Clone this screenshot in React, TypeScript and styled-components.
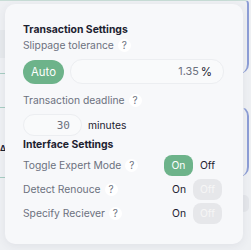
import React from 'react';
import styled, { createGlobalStyle } from 'styled-components';

const GlobalStyle = createGlobalStyle`
  html, body {
    margin: 0;
    padding: 0;
  }
  body {
    font-family: Inter, "Noto Sans", sans-serif;
    background: #eef0f3;
  }
`;

const Page = styled.div`
  position: relative;
  width: 251px;
  height: 250px;
  overflow: hidden;
  background: #eef0f3;
`;

const Backdrop = styled.div`
  display: flex;
  flex-direction: column;
  width: 249px;
`;

const BackPanel = styled.div<{ $h: number; $top?: boolean }>`
  box-sizing: border-box;
  height: ${(p) => p.$h}px;
  border-right: 2px solid #8d9ed6;
  border-top: 1px solid ${(p) => (p.$top ? '#c8ddd6' : 'transparent')};
  border-radius: ${(p) => (p.$top ? '0 4px 10px 0' : '0 10px 10px 0')};
  display: flex;
  flex-direction: column;
`;

const LeftBand = styled.div<{ $h: number; $mt?: number }>`
  width: 6px;
  height: ${(p) => p.$h}px;
  margin-top: ${(p) => p.$mt ?? 0}px;
  background: #e6e9ec;
`;

const LeftLine = styled.div<{ $mt?: number }>`
  width: 6px;
  height: 1px;
  margin-top: ${(p) => p.$mt ?? 0}px;
  background: #a7cdc2;
`;

const Glyph = styled.div`
  margin-top: 36px;
  font-size: 8px;
  font-weight: 700;
  line-height: 8px;
  color: #1d2230;
`;

const Spacer = styled.div<{ $h: number }>`
  height: ${(p) => p.$h}px;
`;

const GreyBlob = styled.div`
  align-self: flex-end;
  width: 10px;
  height: 17px;
  border-radius: 6px;
  background: #e4e6ea;
`;

const Card = styled.div`
  position: absolute;
  left: 5px;
  top: 4px;
  width: 238px;
  height: 240px;
  box-sizing: border-box;
  padding: 19px 19px 0 18px;
  background: #f7f8fa;
  border-radius: 10px;
  box-shadow: 0 2px 8px rgba(60, 70, 90, 0.08);
  display: flex;
  flex-direction: column;
`;

const Title = styled.div`
  font-size: 10.4px;
  font-weight: 700;
  color: #1d2230;
  line-height: 14px;
`;

const LabelRow = styled.div<{ $mt?: number }>`
  display: flex;
  align-items: center;
  gap: 4px;
  margin-top: ${(p) => p.$mt ?? 0}px;
  font-size: 10.3px;
  color: #6c717e;
  line-height: 14px;
`;

const Help = styled.span`
  display: inline-flex;
  align-items: center;
  justify-content: center;
  width: 13px;
  height: 13px;
  border-radius: 50%;
  background: #ffffff;
  font-size: 10px;
  color: #6c717e;
`;

const SlipRow = styled.div`
  display: flex;
  align-items: center;
  gap: 6px;
  margin-top: 7px;
`;

const Pill = styled.div<{ $on?: boolean }>`
  display: flex;
  align-items: center;
  justify-content: center;
  width: 29px;
  height: 21px;
  border-radius: 8px;
  font-size: 10.3px;
  color: ${(p) => (p.$on ? '#ffffff' : '#f6f6f6')};
  background: ${(p) => (p.$on ? '#6db38a' : '#e6e7ea')};
`;

const AutoPill = styled(Pill)`
  height: 24px;
  width: 41px;
  border-radius: 12px;
  font-size: 11.3px;
`;

const Field = styled.div<{ $w: number; $h: number }>`
  box-sizing: border-box;
  width: ${(p) => p.$w}px;
  height: ${(p) => p.$h}px;
  flex-shrink: 0;
  display: flex;
  align-items: center;
  justify-content: flex-end;
  padding-right: 11px;
  border: 1px solid #eceef1;
  border-radius: 12px;
  background: #f9fafb;
  font-size: 10.8px;
  color: #6c717e;
`;

const Percent = styled.span`
  margin-left: 2px;
  font-size: 11.5px;
  color: #1d2230;
`;

const Mono = styled.span`
  font-family: "DejaVu Sans Mono", "Liberation Mono", monospace;
  font-size: 11px;
  color: #6c717e;
`;

const DeadlineRow = styled.div`
  display: flex;
  align-items: center;
  gap: 6px;
  margin-top: 7px;
  font-size: 10.3px;
  color: #1d2230;
`;

const Section = styled.div<{ $mt: number }>`
  margin-top: ${(p) => p.$mt}px;
`;

const ToggleRow = styled.div`
  display: flex;
  align-items: center;
  justify-content: space-between;
  height: 22px;
  margin-top: 2px;
  margin-right: 2px;
`;

const Toggle = styled.div`
  display: flex;
  align-items: center;
`;

const PlainOpt = styled.div`
  padding: 0 7px;
  font-size: 10.3px;
  color: #1d2230;
`;

const rows = [
  { label: 'Toggle Expert Mode', on: true },
  { label: 'Detect Renouce', on: false },
  { label: 'Specify Reciever', on: false },
];

const App: React.FC = () => {
  return (
    <>
      <GlobalStyle />
      <Page>
        <Backdrop>
          <BackPanel $h={74} $top>
            <LeftBand $h={28} $mt={29} />
            <LeftLine $mt={15} />
          </BackPanel>
          <Spacer $h={32} />
          <BackPanel $h={71}>
            <LeftLine />
            <Glyph>Δ</Glyph>
            <LeftLine $mt={25} />
          </BackPanel>
          <Spacer $h={18} />
          <GreyBlob />
        </Backdrop>
        <Card>
          <Title>Transaction Settings</Title>
          <LabelRow $mt={1}>
            Slippage tolerance <Help>?</Help>
          </LabelRow>
          <SlipRow>
            <AutoPill $on>Auto</AutoPill>
            <Field $w={154} $h={25}>
              1.35<Percent>%</Percent>
            </Field>
          </SlipRow>
          <LabelRow $mt={9}>
            Transaction deadline <Help>?</Help>
          </LabelRow>
          <DeadlineRow>
            <Field $w={59} $h={22}>
              <Mono>30</Mono>
            </Field>
            minutes
          </DeadlineRow>
          <Section $mt={2}>
            <Title>Interface Settings</Title>
          </Section>
          {rows.map((r) => (
            <ToggleRow key={r.label}>
              <LabelRow>
                {r.label} <Help>?</Help>
              </LabelRow>
              <Toggle>
                {r.on ? <Pill $on>On</Pill> : <PlainOpt>On</PlainOpt>}
                {r.on ? <PlainOpt>Off</PlainOpt> : <Pill>Off</Pill>}
              </Toggle>
            </ToggleRow>
          ))}
        </Card>
      </Page>
    </>
  );
};

export default App;
